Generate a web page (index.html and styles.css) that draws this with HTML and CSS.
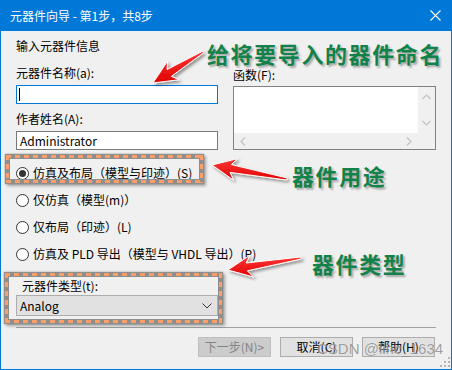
FILE: index.html
```html
<!DOCTYPE html>
<html lang="zh-CN">
<head>
    <meta charset="UTF-8">
    <title>元器件向导</title>
    <link rel="stylesheet" href="styles.css">
</head>
<body>

<div class="screen">
    <div class="window">
        <div class="titlebar">
            <span class="title">元器件向导 - 第1步，共8步</span>
            <svg class="close" width="11" height="11" viewBox="0 0 11 11"><path d="M0.5 0.5L10.5 10.5M10.5 0.5L0.5 10.5" stroke="#fff" stroke-width="1.1"/></svg>
        </div>

        <div class="content">
            <div class="heading">输入元器件信息</div>

            <div class="fields">
                <div class="col-left">
                    <div class="label">元器件名称(a):</div>
                    <div class="input focused"><span class="caret"></span></div>
                    <div class="label second">作者姓名(A):</div>
                    <div class="input">Administrator</div>
                </div>
                <div class="col-right">
                    <div class="label">函数(F):</div>
                    <div class="listbox">
                        <div class="list-area"></div>
                        <div class="vscroll">
                            <svg width="9" height="6" viewBox="0 0 9 6"><path d="M0.5 5L4.5 1L8.5 5" fill="none" stroke="#c2c2c2" stroke-width="1.2"/></svg>
                            <svg width="9" height="6" viewBox="0 0 9 6"><path d="M0.5 1L4.5 5L8.5 1" fill="none" stroke="#c2c2c2" stroke-width="1.2"/></svg>
                        </div>
                        <div class="hscroll">
                            <svg width="6" height="9" viewBox="0 0 6 9"><path d="M5 0.5L1 4.5L5 8.5" fill="none" stroke="#c2c2c2" stroke-width="1.2"/></svg>
                            <svg width="6" height="9" viewBox="0 0 6 9"><path d="M1 0.5L5 4.5L1 8.5" fill="none" stroke="#c2c2c2" stroke-width="1.2"/></svg>
                        </div>
                        <div class="corner"></div>
                    </div>
                </div>
            </div>

            <div class="radios">
                <div class="radio checked"><span class="circle"></span>仿真及布局（模型与印迹）(S)</div>
                <div class="radio"><span class="circle"></span>仅仿真（模型(m)）</div>
                <div class="radio"><span class="circle"></span>仅布局（印迹）(L)</div>
                <div class="radio"><span class="circle"></span>仿真及 PLD 导出（模型与 VHDL 导出）(P)</div>
            </div>

            <div class="type-label">元器件类型(t):</div>
            <div class="combo">
                <span>Analog</span>
                <svg width="10" height="6" viewBox="0 0 10 6"><path d="M0.5 0.5L5 5L9.5 0.5" fill="none" stroke="#333" stroke-width="1"/></svg>
            </div>

            <div class="separator"></div>

            <div class="buttons">
                <div class="btn disabled">下一步(N)&gt;</div>
                <div class="btn">取消(C)</div>
                <div class="btn">帮助(H)</div>
            </div>
        </div>
    </div>

    <!-- 标注 -->
    <div class="mark mark-usage"></div>
    <div class="mark mark-type"></div>

    <svg class="arrows" width="452" height="370" viewBox="0 0 452 370">
        <defs>
            <linearGradient id="red" x1="0" y1="0" x2="0" y2="1">
                <stop offset="0" stop-color="#ff3b3b"/>
                <stop offset="1" stop-color="#e00000"/>
            </linearGradient>
            <filter id="shadow" x="-20%" y="-20%" width="140%" height="140%">
                <feDropShadow dx="2" dy="2" stdDeviation="1.5" flood-color="#000" flood-opacity="0.4"/>
            </filter>
        </defs>
        <g fill="url(#red)" stroke="#fff" stroke-width="1" stroke-linejoin="round" filter="url(#shadow)">
            <polygon points="153,83 179.2,79.7 171.3,76.4 203.5,52.9 202.5,51.2 167,69.6 167.6,61"/>
            <polygon points="212,165 233.6,180.2 230,172.4 286.8,180 287.2,178 231.4,164.6 237.6,158.6"/>
            <polygon points="228,270 253.5,277 247.4,270.8 301.2,259 300.8,257 246.1,263 249.9,255.2"/>
        </g>
    </svg>

    <div class="note note-name">给将要导入的器件命名</div>
    <div class="note note-usage">器件用途</div>
    <div class="note note-type">器件类型</div>

    <div class="watermark">CSDN @linc_1634</div>

    <svg class="grip" width="10" height="10" viewBox="0 0 10 10">
        <g fill="#b5b5b5">
            <rect x="8" y="0" width="2" height="2"/>
            <rect x="4" y="4" width="2" height="2"/>
            <rect x="8" y="4" width="2" height="2"/>
            <rect x="0" y="8" width="2" height="2"/>
            <rect x="4" y="8" width="2" height="2"/>
            <rect x="8" y="8" width="2" height="2"/>
        </g>
    </svg>
</div>

</body>
</html>
```

FILE: styles.css
```css
* {
    margin: 0;
    padding: 0;
    box-sizing: border-box;
}
body {
    font-family: "Noto Sans CJK SC", "Noto Sans", sans-serif;
    font-size: 12px;
    color: #000;
    background: #fff;
}
.screen {
    position: relative;
    width: 452px;
    height: 370px;
}
.window {
    width: 452px;
    height: 370px;
    background: #f0f0f0;
    border: 1px solid #0078d7;
    border-top: none;
    display: flex;
    flex-direction: column;
}
.titlebar {
    height: 31px;
    flex-shrink: 0;
    background: #0078d7;
    color: #fff;
    display: flex;
    align-items: center;
    justify-content: space-between;
    padding: 0 10px 0 9px;
    line-height: 16px;
}
.content {
    padding: 0 15px;
}
.heading {
    margin-top: 7px;
    line-height: 16px;
}
.fields {
    display: flex;
    gap: 15px;
}
.col-left {
    width: 202px;
    margin-top: 11px;
}
.col-right {
    width: 203px;
    margin-top: 13px;
}
.label {
    line-height: 16px;
}
.label.second {
    margin-top: 7px;
}
.input {
    height: 19px;
    margin-top: 4px;
    background: #fff;
    border: 1px solid #7a7a7a;
    padding-left: 3px;
    line-height: 17px;
    display: flex;
    align-items: center;
}
.input.focused {
    border-color: #0078d7;
}
.caret {
    width: 1px;
    height: 13px;
    margin-left: -1px;
    background: #000;
}
.listbox {
    margin-top: 3px;
    height: 64px;
    border: 1px solid #828282;
    display: grid;
    grid-template-columns: 1fr 17px;
    grid-template-rows: 1fr 16px;
}
.list-area {
    background: #fff;
}
.vscroll {
    background: #f0f0f0;
    display: flex;
    flex-direction: column;
    justify-content: space-between;
    align-items: center;
    padding: 7px 0 7px;
}
.hscroll {
    background: #f0f0f0;
    display: flex;
    justify-content: space-between;
    align-items: center;
    padding: 0 6px;
}
.corner {
    background: #f0f0f0;
}
.radios {
    margin-top: 15px;
    display: flex;
    flex-direction: column;
    gap: 11px;
}
.radio {
    display: flex;
    align-items: center;
    gap: 4px;
    height: 16px;
    line-height: 16px;
}
.circle {
    width: 13px;
    height: 13px;
    border: 1px solid #333;
    border-radius: 50%;
    background: #fff;
    display: flex;
    align-items: center;
    justify-content: center;
}
.radio.checked .circle::after {
    content: "";
    width: 7px;
    height: 7px;
    border-radius: 50%;
    background: #333;
}
.type-label {
    margin-top: 16px;
    padding-left: 6px;
    line-height: 16px;
}
.combo {
    margin-top: 1px;
    width: 202px;
    height: 21px;
    background: #e1e1e1;
    border: 1px solid #adadad;
    display: flex;
    align-items: center;
    justify-content: space-between;
    padding: 0 5px 0 3px;
}
.separator {
    margin-top: 11px;
    height: 1px;
    background: #a0a0a0;
}
.buttons {
    margin-top: 9px;
    display: flex;
    justify-content: flex-end;
    gap: 9px;
    padding-right: 1px;
}
.btn {
    width: 73px;
    height: 20px;
    background: #e1e1e1;
    border: 1px solid #adadad;
    display: flex;
    align-items: center;
    justify-content: center;
    line-height: 16px;
}
.btn.disabled {
    background: #cccccc;
    border-color: #bfbfbf;
    color: #838383;
}

/* 标注框 */
.mark {
    position: absolute;
    border: 5px solid #8e8e8e;
    box-shadow: 0 0 2px rgba(0, 0, 0, 0.3), 2px 2px 3px rgba(0, 0, 0, 0.3);
}
.mark::after {
    content: "";
    position: absolute;
    inset: -4px;
    background:
        repeating-linear-gradient(90deg, #fa9f6b 0 5px, transparent 5px 9px) left top / 100% 3px no-repeat,
        repeating-linear-gradient(90deg, #fa9f6b 0 5px, transparent 5px 9px) left bottom / 100% 3px no-repeat,
        repeating-linear-gradient(180deg, #fa9f6b 0 5px, transparent 5px 9px) left top / 3px 100% no-repeat,
        repeating-linear-gradient(180deg, #fa9f6b 0 5px, transparent 5px 9px) right top / 3px 100% no-repeat;
}
.mark-usage {
    left: 5px;
    top: 154px;
    width: 199px;
    height: 30px;
}
.mark-type {
    left: 4px;
    top: 272px;
    width: 219px;
    height: 52px;
}
.arrows {
    position: absolute;
    left: 0;
    top: 0;
}
.note {
    position: absolute;
    font-size: 22px;
    font-weight: 700;
    line-height: 22px;
    letter-spacing: 1.6px;
    color: #11834a;
    text-shadow: 2px 2px 2px rgba(0, 0, 0, 0.3);
    white-space: nowrap;
}
.note-name {
    left: 207px;
    top: 42px;
}
.note-usage {
    left: 292px;
    top: 164px;
}
.note-type {
    left: 312px;
    top: 252px;
}
.watermark {
    position: absolute;
    left: 317px;
    top: 340px;
    font-family: "Liberation Sans", Arial, sans-serif;
    font-size: 15px;
    line-height: 18px;
    color: rgba(80, 80, 80, 0.55);
    text-shadow: 0 0 1px rgba(255, 255, 255, 0.8);
}
.grip {
    position: absolute;
    left: 440px;
    top: 357px;
}
```
